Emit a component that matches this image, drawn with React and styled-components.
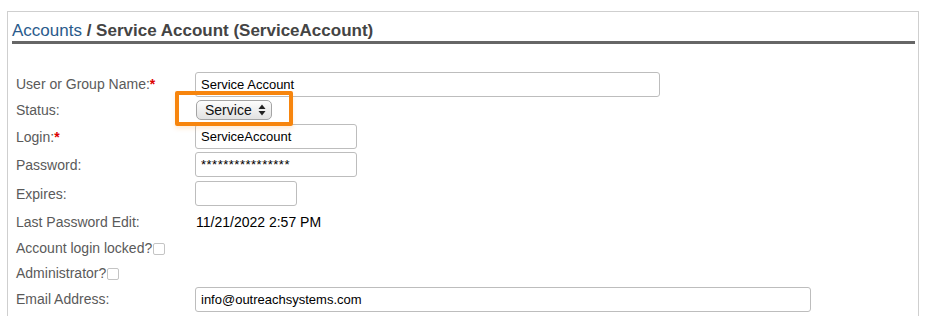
import React from "react";
import styled, { createGlobalStyle } from "styled-components";

const GlobalStyle = createGlobalStyle`
  body {
    margin: 0;
    background: #fff;
    font-family: "Liberation Sans", Arial, sans-serif;
  }
`;

const Panel = styled.div`
  box-sizing: border-box;
  margin: 11px 0 0 7px;
  width: 912px;
  height: 320px;
  border: 1px solid #cfcfcf;
  border-bottom: none;
`;

const Header = styled.div`
  margin: 0 3px 0 4px;
  padding-top: 9px;
  padding-bottom: 0;
  border-bottom: 3px solid #666;
  font-size: 17px;
  line-height: 20px;
  font-weight: bold;
  color: #444;
`;

const Crumb = styled.a`
  font-weight: normal;
  color: #2a5b8c;
  text-decoration: none;
`;

const Form = styled.div`
  display: flex;
  flex-direction: column;
  padding: 27px 0 0 8px;
`;

const Row = styled.div`
  display: grid;
  grid-template-columns: 179px 1fr;
  align-items: center;
  height: ${(props) => props.h}px;
`;

const Label = styled.div`
  display: flex;
  align-items: center;
  font-size: 14px;
  color: #5a5a5a;
  white-space: nowrap;
`;

const Required = styled.span`
  color: #d00;
  font-weight: bold;
`;

const Input = styled.input`
  box-sizing: border-box;
  width: ${(props) => props.w}px;
  height: 25px;
  padding: 0 5px;
  border: 1px solid #bdbdbd;
  border-radius: 3px;
  font-family: "Liberation Sans", Arial, sans-serif;
  font-size: 13px;
  letter-spacing: ${(props) => (props.masked ? "0.5px" : "normal")};
  color: #000;
  background: #fff;
  outline: none;
`;

const Value = styled.div`
  padding-left: 1px;
  font-size: 14px;
  color: #000;
`;

const Check = styled.span`
  display: inline-block;
  box-sizing: border-box;
  width: 12px;
  height: 12px;
  margin: 3px 0 0 1px;
  border: 1px solid #c4c4c4;
  border-radius: 2px;
  background: #fff;
`;

const SelectWrap = styled.div`
  position: relative;
  width: 76px;
  margin-left: 1px;
`;

const SelectButton = styled.div`
  box-sizing: border-box;
  display: flex;
  align-items: center;
  justify-content: space-between;
  width: 76px;
  height: 20px;
  padding: 0 5px 0 8px;
  border: 1px solid #a4a4a4;
  border-radius: 5px;
  background: linear-gradient(#fdfdfd, #e2e2e2);
  font-size: 14px;
  color: #111;
`;

const Highlight = styled.div`
  position: absolute;
  left: -21px;
  top: -9px;
  width: 118px;
  height: 35px;
  box-sizing: border-box;
  border: 4px solid #f7850d;
  border-radius: 2px;
  box-shadow: 0 3px 4px rgba(247, 133, 13, 0.15);
  pointer-events: none;
`;

const Arrows = () => (
  <svg width="8" height="12" viewBox="0 0 8 12">
    <path d="M4 0.5 L7.5 5 L0.5 5 Z" fill="#222" />
    <path d="M4 11.5 L7.5 7 L0.5 7 Z" fill="#222" />
  </svg>
);

const App = () => {
  return (
    <>
      <GlobalStyle />
      <Panel>
        <Header>
          <Crumb>Accounts</Crumb> / Service Account (ServiceAccount)
        </Header>
        <Form>
          <Row h={26}>
            <Label>
              User or Group Name:<Required>*</Required>
            </Label>
            <Input w={465} defaultValue="Service Account" />
          </Row>
          <Row h={26}>
            <Label>Status:</Label>
            <SelectWrap>
              <SelectButton>
                Service
                <Arrows />
              </SelectButton>
              <Highlight />
            </SelectWrap>
          </Row>
          <Row h={27}>
            <Label>
              Login:<Required>*</Required>
            </Label>
            <Input w={162} defaultValue="ServiceAccount" />
          </Row>
          <Row h={29}>
            <Label>Password:</Label>
            <Input w={162} masked defaultValue="****************" />
          </Row>
          <Row h={29}>
            <Label>Expires:</Label>
            <Input w={102} defaultValue="" />
          </Row>
          <Row h={28}>
            <Label>Last Password Edit:</Label>
            <Value>11/21/2022 2:57 PM</Value>
          </Row>
          <Row h={23}>
            <Label>
              Account login locked?<Check />
            </Label>
          </Row>
          <Row h={27}>
            <Label>
              Administrator?<Check />
            </Label>
          </Row>
          <Row h={26}>
            <Label>Email Address:</Label>
            <Input w={616} defaultValue="info@outreachsystems.com" />
          </Row>
        </Form>
      </Panel>
    </>
  );
};

export default App;
